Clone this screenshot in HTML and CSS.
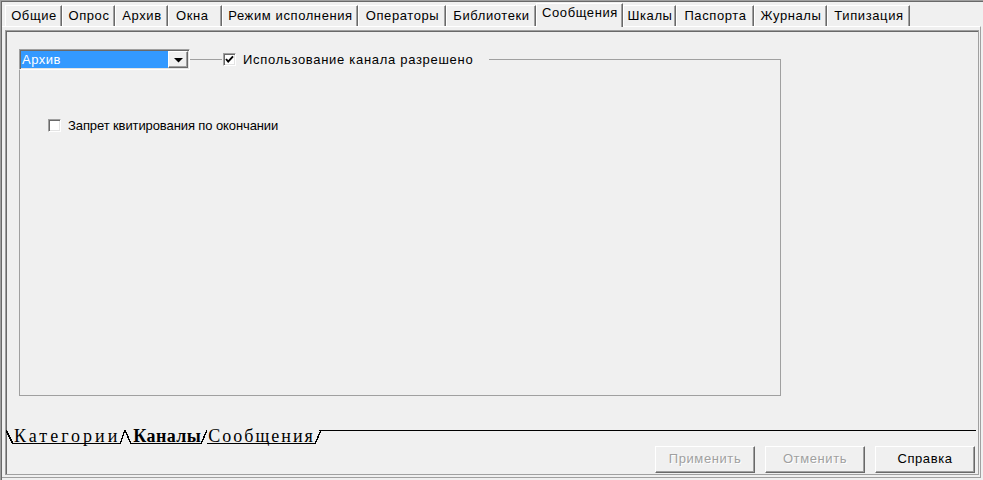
FILE: index.html
```html
<!DOCTYPE html>
<html lang="ru">
<head>
<meta charset="utf-8">
<title>Сообщения</title>
<link rel="stylesheet" href="styles.css">
</head>
<body>
<div class="window">
  <div class="tabs">
    <div class="tab w57">Общие</div>
    <div class="tab w53">Опрос</div>
    <div class="tab w53">Архив</div>
    <div class="tab w54 left">Окна</div>
    <div class="tab w136">Режим исполнения</div>
    <div class="tab w88">Операторы</div>
    <div class="tab w90">Библиотеки</div>
    <div class="tab sel w87">Сообщения</div>
    <div class="tab w53">Шкалы</div>
    <div class="tab w78">Паспорта</div>
    <div class="tab w73">Журналы</div>
    <div class="tab w83">Типизация</div>
  </div>
  <div class="page">
    <div class="inner">
      <div class="group">
        <div class="group-head">
          <div class="combo">
            <div class="combo-value">Архив</div>
            <div class="combo-btn">
              <svg width="9" height="5" viewBox="0 0 9 5"><polygon points="0,0 9,0 4.5,4.6" fill="#000"/></svg>
            </div>
          </div>
          <div class="head-check">
            <span class="cb">
              <svg width="11" height="11" viewBox="0 0 11 11"><path d="M2 5 L4.2 7.6 L9 2.4" fill="none" stroke="#000" stroke-width="1.9"/></svg>
            </span>
            <span class="cb-label head-label">Использование канала разрешено</span>
          </div>
        </div>
        <div class="check-row">
          <span class="cb"></span>
          <span class="cb-label">Запрет квитирования по окончании</span>
        </div>
      </div>
      <div class="tabset">
        <span class="edge back"></span>
        <span class="ts-tab first">Категории</span>
        <span class="edge double"></span>
        <span class="ts-tab active">Каналы</span>
        <span class="edge fwd"></span>
        <span class="ts-tab last">Сообщения</span>
        <span class="edge fwd"></span>
        <span class="ts-fill"></span>
      </div>
      <div class="buttons">
        <div class="btn disabled">Применить</div>
        <div class="btn disabled">Отменить</div>
        <div class="btn">Справка</div>
      </div>
    </div>
  </div>
</div>
</body>
</html>
```
FILE: styles.css
```css
html, body {
  margin: 0;
  padding: 0;
  background: #f0f0f0;
}
body {
  width: 983px;
  height: 480px;
  overflow: hidden;
  font-family: "Liberation Sans", Arial, sans-serif;
  font-size: 13px;
  letter-spacing: 0.6px;
  color: #000;
}
.window {
  width: 983px;
  height: 480px;
  box-sizing: border-box;
  border-top: 1px solid #a0a0a0;
  border-left: 1px solid #a0a0a0;
  box-shadow: inset 1px 1px 0 #696969;
  display: flex;
  flex-direction: column;
}
/* top tabs */
.tabs {
  display: flex;
  align-items: flex-end;
  height: 23px;
  margin: 2px 0 0 4px;
}
.tab {
  box-sizing: border-box;
  height: 21px;
  padding: 3px 1px 0 2px;
  line-height: 14px;
  text-align: center;
  white-space: nowrap;
  border-top: 1px solid #fff;
  border-left: 1px solid #fff;
  border-right: 1px solid #696969;
  box-shadow: inset -1px 0 0 #a0a0a0;
  background: #f0f0f0;
}
.tab.left {
  text-align: left;
  padding-left: 7px;
}
.tab.sel {
  height: 24px;
  margin-bottom: -1px;
  padding-top: 2px;
  position: relative;
  z-index: 1;
}
.w53 { width: 53px; }
.w54 { width: 54px; }
.w57 { width: 57px; }
.w73 { width: 73px; }
.w78 { width: 78px; }
.w83 { width: 83px; }
.w87 { width: 87px; }
.w88 { width: 88px; }
.w90 { width: 90px; }
.w136 { width: 136px; }

/* page */
.page {
  margin-left: 1px;
  width: 979px;
  height: 452px;
  box-sizing: border-box;
  border-top: 1px solid #fff;
  border-right: 1px solid #a0a0a0;
  border-bottom: 1px solid #a0a0a0;
  padding: 3px 0 0 3px;
}
.inner {
  width: 974px;
  height: 445px;
  box-sizing: border-box;
  border: 1px solid #a0a0a0;
  box-shadow: inset 1px 1px 0 #696969;
  padding: 1px 0 0 1px;
  display: flex;
  flex-direction: column;
}

/* group box */
.group {
  box-sizing: border-box;
  width: 762px;
  height: 337px;
  margin: 27px 0 0 12px;
  border: 1px solid #a0a0a0;
  display: flex;
  flex-direction: column;
  align-items: flex-start;
}
.group-head {
  display: flex;
  align-items: center;
  height: 21px;
  margin: -11px 0 0 -1px;
}
.combo {
  box-sizing: border-box;
  width: 171px;
  height: 21px;
  display: flex;
  border-top: 1px solid #a0a0a0;
  border-left: 1px solid #a0a0a0;
  border-right: 1px solid #fff;
  border-bottom: 1px solid #fff;
  box-shadow: inset 1px 1px 0 #696969, inset -1px -1px 0 #e3e3e3;
  padding: 1px;
  background: #fff;
}
.combo-value {
  flex: 1;
  background: #3399ff;
  color: #fff;
  line-height: 17px;
  padding-left: 1px;
  letter-spacing: 0.5px;
}
.combo-btn {
  box-sizing: border-box;
  width: 20px;
  height: 17px;
  background: #f0f0f0;
  border-top: 1px solid #fff;
  border-left: 1px solid #fff;
  border-right: 1px solid #696969;
  border-bottom: 1px solid #696969;
  box-shadow: inset -1px -1px 0 #a0a0a0;
  display: flex;
  align-items: center;
  justify-content: center;
}
.combo-btn svg { display: block; margin-top: 1px; }
.head-check {
  display: flex;
  align-items: center;
  margin-left: 32px;
  padding: 0 16px 0 1px;
  height: 21px;
  background: #f0f0f0;
}
.cb {
  box-sizing: border-box;
  width: 13px;
  height: 13px;
  background: #fff;
  border-top: 1px solid #a0a0a0;
  border-left: 1px solid #a0a0a0;
  border-right: 1px solid #fff;
  border-bottom: 1px solid #fff;
  box-shadow: inset 1px 1px 0 #696969, inset -1px -1px 0 #e3e3e3;
  display: flex;
  align-items: center;
  justify-content: center;
  flex: none;
}
.cb svg { display: block; }
.cb-label {
  margin-left: 7px;
  white-space: nowrap;
  line-height: 15px;
  letter-spacing: -0.1px;
}
.cb-label.head-label {
  letter-spacing: 0.7px;
}
.check-row {
  display: flex;
  align-items: center;
  margin: 48px 0 0 28px;
}

/* bottom tab set */
.tabset {
  display: flex;
  height: 14px;
  margin: 34px 0 0 -1px;
  font-family: "Liberation Serif", "Times New Roman", serif;
  font-size: 18px;
  letter-spacing: 2.4px;
  line-height: 13px;
}
.edge {
  flex: none;
  height: 14px;
}
.edge.back {
  width: 7px;
  background: linear-gradient(to top right, transparent calc(50% - 0.7px), #000 calc(50% - 0.7px), #000 calc(50% + 0.7px), transparent calc(50% + 0.7px));
}
.edge.fwd {
  width: 6px;
  background: linear-gradient(to top left, transparent calc(50% - 0.7px), #000 calc(50% - 0.7px), #000 calc(50% + 0.7px), transparent calc(50% + 0.7px));
}
.edge.double {
  width: 11px;
  background:
    linear-gradient(to top left, transparent calc(50% - 0.7px), #000 calc(50% - 0.7px), #000 calc(50% + 0.7px), transparent calc(50% + 0.7px)) left top / 5px 14px no-repeat,
    linear-gradient(to top right, transparent calc(50% - 0.7px), #000 calc(50% - 0.7px), #000 calc(50% + 0.7px), transparent calc(50% + 0.7px)) right top / 6px 14px no-repeat;
}
.ts-tab {
  height: 13px;
  border-bottom: 1px solid #000;
  padding: 0 0 0 1px;
  white-space: nowrap;
  color: #000;
}
.ts-tab.first {
  letter-spacing: 3px;
}
.ts-tab.active {
  font-weight: bold;
  letter-spacing: 0.4px;
  padding: 0 0 0 2px;
}
.ts-tab.last {
  letter-spacing: 2px;
}
.ts-fill {
  flex: 1;
  height: 13px;
  border-top: 1px solid #000;
  margin: 0 2px 0 -2px;
}

/* buttons */
.buttons {
  display: flex;
  justify-content: flex-end;
  gap: 10px;
  margin-top: 2px;
  padding-right: 3px;
}
.btn {
  box-sizing: border-box;
  width: 100px;
  height: 27px;
  border-top: 1px solid #fff;
  border-left: 1px solid #fff;
  border-right: 1px solid #696969;
  border-bottom: 1px solid #696969;
  box-shadow: inset -1px -1px 0 #a0a0a0;
  background: #f0f0f0;
  display: flex;
  align-items: center;
  justify-content: center;
  padding-bottom: 2px;
}
.btn.disabled {
  color: #a0a0a0;
  text-shadow: 1px 1px 0 #fff;
}
```
